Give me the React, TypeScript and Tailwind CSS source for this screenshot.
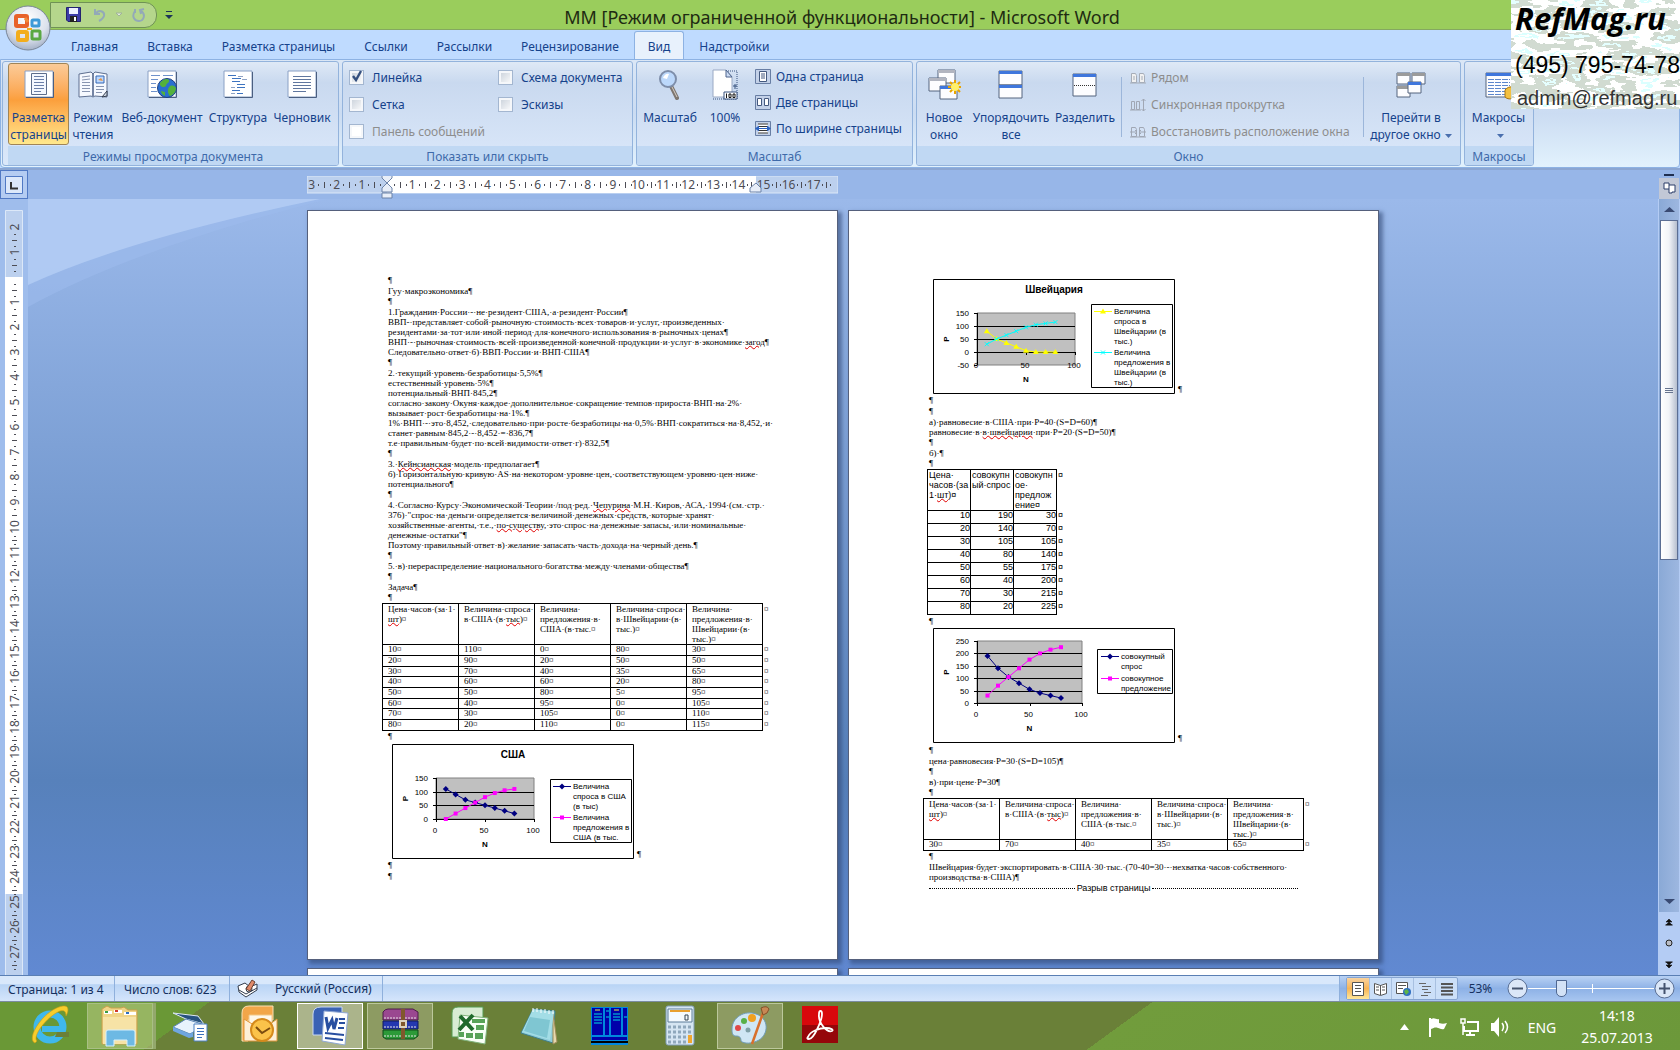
import { useState } from "react";
import type { ReactNode } from "react";

const uiFont = "font-['Noto_Sans','Open_Sans',sans-serif]";

/* ---------- ribbon icons ---------- */

const Sheet = ({ children }: { children?: ReactNode }) => (
  <svg width="32" height="32" viewBox="0 0 32 32">
    <path d="M2 3h28v26H2z" fill="#fff" stroke="#8aa0c4" />
    <path d="M30.500 4v25.500H3" fill="none" stroke="#4b5f80" />
    {children}
  </svg>
);

const PageLayoutIcon = () => (
  <Sheet>
    <path d="M8.500 5.500h15v21h-15z" fill="#f4f8ff" stroke="#5c6d8c" />
    <path d="M11 8.500h10M11 11.500h10M11 14.500h10M11 17.500h10M11 20.500h10M11 23.500h7" stroke="#6b7fa8" />
  </Sheet>
);

const ReadingIcon = () => (
  <svg width="32" height="32" viewBox="0 0 32 32">
    <path d="M2 6l12-2 2 2 2-2 12 2v23l-12-1-2 1-2-1-12 1z" fill="#f6f9ff" stroke="#5e6f90" />
    <path d="M16 6v23" stroke="#7484a4" strokeWidth="2" />
    <path d="M5 9l8-1M5 12l8-1M5 14.500h8M5 17.500h8M5 20.500h8M5 23.500h8M19 18.500h8M19 21.500h8M19 24.500h6" stroke="#8794b0" />
    <path d="M19 8h8v7h-8z" fill="#bcd8ff" stroke="#3769b4" />
    <path d="M21 12l3-2 2 3z" fill="#e59442" />
    <path d="M25 29l5-1v-5z" fill="#d3dbe8" stroke="#333c4c" />
  </svg>
);

const WebIcon = () => (
  <Sheet>
    <path d="M5 7.500h9M17 7.500h10M5 11.500h7M5 15.500h5M5 19.500h5M5 23.500h6" stroke="#6f92cc" />
    <circle cx="21" cy="20" r="9.500" fill="#2a6fd0" stroke="#1d3f80" />
    <path d="M14 15c3-4 7-5 9-3 1 3-3 3-3 6-2 2-5 1-6-1zM23 19c3-3 6-1 7 1 0 4-3 7-6 8-2-2-3-6-1-9zM15 23l4 1v4c-2-1-4-3-4-5z" fill="#54b13c" />
  </Sheet>
);

const StructureIcon = () => (
  <Sheet>
    <path d="M6 7.500h8M10 10.500h9M10 13.500h8M15 16.500h8M15 19.500h8M10 22.500h8M15 25.500h6" stroke="#3e74c0" />
    <path d="M16 8.500h5M20 11.500h5M9 19.500h4M9 25.500h4" stroke="#8fa2c4" />
  </Sheet>
);

const DraftIcon = () => (
  <Sheet>
    <path d="M7 8.500h18M7 11.500h18M7 14.500h18M7 17.500h18M7 20.500h18M7 23.500h13" stroke="#60779f" />
  </Sheet>
);

const LensIcon = () => (
  <svg width="32" height="32" viewBox="0 0 32 32">
    <path d="M17 18l6 12" stroke="#7d7670" strokeWidth="4" strokeLinecap="round" />
    <path d="M18 19l5 10" stroke="#d8cfc6" />
    <circle cx="14" cy="11" r="8" fill="#bcd8fb" stroke="#7e8eaa" strokeWidth="2" />
    <path d="M9 10a5 5 0 0 1 6-4l-2 5z" fill="#fff" />
  </svg>
);

const HundredIcon = () => (
  <svg width="32" height="32" viewBox="0 0 32 32">
    <path d="M4 31h24V3H17" fill="none" stroke="#39527e" strokeDasharray="1 1" />
    <path d="M4 2h13l6 7v20H4z" fill="#fff" stroke="#9aa9c4" />
    <path d="M17 2v7h6z" fill="#cddcf4" stroke="#4e648c" />
    <path d="M24 18h4M26 16v5" stroke="#39527e" />
    <path d="M15 24h13v7H15z" fill="#fff" stroke="#39527e" />
    <path d="M17.500 25.500v4.500M20 26h2v3.500h-2zM24 26h2v3.500h-2z" fill="none" stroke="#111" />
  </svg>
);

const Win = ({ x, y, w, h, c = "#3f76dc" }: { x: number; y: number; w: number; h: number; c?: string }) => (
  <>
    <path d={`M${x} ${y}h${w}v${h}h${-w}z`} fill="#fdfdff" stroke="#55657f" />
    <path d={`M${x} ${y}h${w}v3h${-w}z`} fill={c} />
  </>
);

const NewWindowIcon = () => (
  <svg width="34" height="32" viewBox="0 0 34 32">
    <Win x={11} y={2} w={17} h={13} c="#b2b5c0" />
    <Win x={2} y={10} w={17} h={13} c="#b2b5c0" />
    <Win x={13} y={18} w={17} h={13} />
    <path d="M28 12v14M21 19h14M23 14l10 10M33 14L23 24" stroke="#e9a400" strokeWidth="2" />
    <circle cx="28" cy="19" r="4" fill="#fff06a" />
  </svg>
);

const ArrangeIcon = () => (
  <svg width="32" height="32" viewBox="0 0 32 32">
    <Win x={4} y={3} w={23} h={14} />
    <Win x={4} y={17} w={23} h={13} />
  </svg>
);

const SplitIcon = () => (
  <svg width="32" height="32" viewBox="0 0 32 32">
    <Win x={4} y={6} w={23} h={22} />
    <path d="M5 17.500h22" stroke="#333" strokeDasharray="1 1" />
  </svg>
);

const SwitchIcon = () => (
  <svg width="32" height="32" viewBox="0 0 32 32">
    <Win x={2} y={5} w={13} h={11} c="#9b9b9b" />
    <Win x={17} y={5} w={13} h={11} c="#9b9b9b" />
    <Win x={2} y={18} w={13} h={11} c="#9b9b9b" />
    <Win x={13} y={14} w={13} h={11} />
  </svg>
);

const MacroIcon = () => (
  <svg width="32" height="32" viewBox="0 0 32 32">
    <Win x={3} y={5} w={26} h={24} />
    <path d="M5 11.500h22M5 14.500h22M5 17.500h22M5 20.500h22M5 23.500h22M5 26.500h22" stroke="#5c86cc" strokeDasharray="6 1" />
    <path d="M22 22c4-5 10-3 10-1v8c-4 3-8 2-10 0z" fill="#f3c040" stroke="#a87410" />
  </svg>
);

const SmallIcon = ({ kind }: { kind: string }) => (
  <svg width="16" height="16" viewBox="0 0 16 16">
    {["one", "two", "wide"].includes(kind) && (
      <path d="M.5.5h15v14H.5z" fill="#c3d1e8" stroke="#687ea4" />
    )}
    {kind === "one" && <path d="M4.500 2.500h7v10h-7zM6 5h4M6 7h4M6 9h4" fill="#fff" stroke="#44597f" />}
    {kind === "two" && <path d="M2.500 3.500h4v7h-4zM9.500 3.500h4v7h-4z" fill="#fff" stroke="#44597f" />}
    {kind === "wide" && (
      <>
        <path d="M3 2.500h10v10H3z" fill="#fff" />
        <path d="M3 3h10M3 5.500h10M3 9.500h10M3 12h10" stroke="#333" />
        <path d="M0 7.500l4-3v6zM16 7.500l-4-3v6z" fill="#2c62c0" />
        <path d="M3 7.500h10" stroke="#2c62c0" />
      </>
    )}
    {kind === "side" && <path d="M1.500 3.500h4l1 2v7h-5zM9.500 3.500h4l1 2v7h-5zM0 13h16M3 7h2M3 9h2M11 7h2M11 9h2" fill="#f1f1f1" stroke="#a6adb8" />}
    {kind === "sync" && <path d="M1.500 4.500h3v8h-3zM6.500 4.500h3v8h-3zM0 13h11M13.500 2v12M11.500 4l2-2 2 2M11.500 12l2 2 2-2" fill="none" stroke="#a0a7b4" />}
    {kind === "reset" && <path d="M1.500 3.500h4l1 2v7h-5zM9.500 3.500h4l1 2v7h-5zM0 13h16M0 8h7M5 6l2 2-2 2M16 8H9M11 6L9 8l2 2" fill="none" stroke="#a0a7b4" />}
  </svg>
);

/* ---------- ribbon ---------- */

const tabs = ["Главная", "Вставка", "Разметка страницы", "Ссылки", "Рассылки", "Рецензирование", "Вид", "Надстройки"];

const Group = ({ title, className, children }: { title: string; className: string; children: ReactNode }) => (
  <section
    className={`flex h-[105px] shrink-0 flex-col overflow-hidden rounded-[3px] border border-[#93b3dc] bg-linear-to-b from-[#dfe9f6] from-0% via-[#c9d9ef] via-20% to-[#dbe8fa] ${className}`}
  >
    <div className="flex h-[84px]">{children}</div>
    <h2 className="h-[19px] bg-[#c0d8f3] text-center leading-[21px] text-[#3e6aaa]">{title}</h2>
  </section>
);

const BigButton = ({ icon, lines, className, active }: { icon: ReactNode; lines: ReactNode[]; className: string; active?: boolean }) => (
  <button
    className={`mt-px flex h-[82px] shrink-0 flex-col items-center whitespace-nowrap rounded-[3px] border pt-1 ${
      active
        ? "border-[#a08456] bg-linear-to-b from-[#fbcb98] from-0% via-[#fb9f3c] via-45% to-[#ffe88c]"
        : "border-transparent"
    } ${className}`}
  >
    {icon}
    <span className="mt-[9px] leading-[17px]">
      {lines.map((line, i) => (
        <span key={i} className="block">
          {line}
        </span>
      ))}
    </span>
  </button>
);

const Check = ({ label, checked, disabled }: { label: string; checked?: boolean; disabled?: boolean }) => {
  const [on, setOn] = useState(!!checked);
  return (
    <label className={`relative flex h-[27px] items-center gap-2 whitespace-nowrap ${disabled ? "text-[#8d8d8d]" : ""}`}>
      <input
        type="checkbox"
        checked={on}
        disabled={disabled}
        onChange={() => setOn(!on)}
        className="size-[15px] appearance-none border border-[#a3b6d0] bg-linear-to-br from-[#c6ced8] to-white outline-2 -outline-offset-3 outline-[#f5f7fa] disabled:from-white"
      />
      {on && (
        <svg className="pointer-events-none absolute left-0.5 top-1.5" width="12" height="13" viewBox="0 0 12 13">
          <path d="M2 6l3 4 5-9" fill="none" stroke="#35507f" strokeWidth="2.400" />
        </svg>
      )}
      {label}
    </label>
  );
};

const RowButton = ({ kind, label, disabled }: { kind: string; label: string; disabled?: boolean }) => (
  <button disabled={disabled} className="flex h-[26px] items-center gap-[5px] whitespace-nowrap disabled:h-[27px] disabled:text-[#8d8d8d]">
    <SmallIcon kind={kind} />
    {label}
  </button>
);

const Divider = () => <span className="mt-[15px] h-[60px] w-px bg-[#9cb6da]" />;

const OfficeLogo = () => (
  <svg className="absolute left-1 top-1 z-10" width="48" height="48" viewBox="0 0 48 48">
    <defs>
      <radialGradient id="orb" cx=".5" cy=".3" r=".75">
        <stop offset="0" stopColor="#fff" />
        <stop offset=".6" stopColor="#dbe1ec" />
        <stop offset="1" stopColor="#9aa8c0" />
      </radialGradient>
    </defs>
    <circle cx="24" cy="24" r="22" fill="url(#orb)" stroke="#7a8698" />
    <g fill="none" strokeWidth="4">
      <rect x="12" y="12" width="11" height="10" rx="1" stroke="#e8622a" />
      <path d="M21 14l3 4" stroke="#f08a3c" strokeWidth="3" />
      <rect x="28" y="16" width="7" height="6" rx="1" stroke="#3e9ad8" strokeWidth="3" />
      <rect x="14" y="28" width="9" height="8" rx="1" stroke="#f3ad1c" />
      <rect x="28" y="27" width="8" height="8" rx="1" stroke="#5aa843" strokeWidth="3" />
      <path d="M23 25h5" stroke="#f3ad1c" strokeWidth="2" />
    </g>
  </svg>
);

const TitleBar = () => (
  <header className="flex h-[30px] items-center border-b border-[#84a860] bg-[#9acd5c] text-[#1e2b12]">
    <div className="ml-[50px] flex h-[26px] w-[107px] items-center rounded-r-[12px] border border-[#6f9255] bg-[#b5d68c] pl-[15px]">
      <button aria-label="Сохранить">
        <svg width="15" height="15" viewBox="0 0 15 15">
          <path d="M.5.5h14v14H2l-1.500-1.500z" fill="#3c3ca8" stroke="#23236e" />
          <path d="M3 1h9v6H3z" fill="#eef1ff" />
          <path d="M4 9h7v6H4z" fill="#222" />
          <path d="M8 10h2v4H8z" fill="#fff" />
        </svg>
      </button>
      <button aria-label="Отменить" className="ml-3">
        <svg width="14" height="14" viewBox="0 0 14 14">
          <path d="M2 1v5h5M3 5c4-4 9-1 8 3-1 3-3 4-5 5" fill="none" stroke="#93a9b8" strokeWidth="2" />
        </svg>
      </button>
      <svg className="ml-2" width="8" height="5" viewBox="0 0 8 5">
        <path d="M1 1h6L4 4z" fill="#e2ecda" stroke="#9fb29a" />
      </svg>
      <button aria-label="Повторить" className="ml-[9px]">
        <svg width="14" height="14" viewBox="0 0 14 14">
          <path d="M3 3c-4 6 0 10 4 10 5 0 7-7 2-10M3 1v4M12 1L8 2l1 4" fill="none" stroke="#93a9b8" strokeWidth="2" />
        </svg>
      </button>
    </div>
    <svg className="ml-2" width="8" height="10" viewBox="0 0 8 10">
      <path d="M1 1.500h6" stroke="#1c3557" />
      <path d="M0 5h8L4 9z" fill="#1c3557" />
    </svg>
    <h1 className="flex-1 pr-[169px] pt-1 text-center text-[18px] leading-6">
      ММ [Режим ограниченной функциональности] - Microsoft Word
    </h1>
  </header>
);

const Arrow = () => (
  <svg className="ml-1 inline" width="7" height="4" viewBox="0 0 7 4">
    <path d="M0 0h7L3.500 4z" fill="#4a6fae" />
  </svg>
);

const Ribbon = () => {
  const [tab, setTab] = useState("Вид");
  return (
    <div className="bg-[#bfdbff] text-[#15428b]">
      <nav className="flex h-[29px] items-end gap-px pl-[57px]">
        {tabs.map((name) => (
          <button
            key={name}
            onClick={() => setTab(name)}
            className={`h-7 whitespace-nowrap rounded-t-[3px] border border-b-0 px-[13px] pt-0.5 ${
              tab === name ? "border-[#8db2e3] bg-[#e8f1fc]" : "border-transparent"
            }`}
          >
            {name}
          </button>
        ))}
      </nav>
      <div className="flex h-[109px] gap-[3px] rounded-b-[4px] border border-[#8db2e3] bg-linear-to-b from-[#dbe7f6] via-[#cbdcf2] to-[#e2f2fd] p-px">
        <Group title="Режимы просмотра документа" className="w-[337px] pl-[5px]">
          <BigButton active className="w-[61px]" icon={<PageLayoutIcon />} lines={["Разметка", "страницы"]} />
          <BigButton className="w-12" icon={<ReadingIcon />} lines={["Режим", "чтения"]} />
          <BigButton className="w-[90px]" icon={<WebIcon />} lines={["Веб-документ"]} />
          <BigButton className="w-[62px]" icon={<StructureIcon />} lines={["Структура"]} />
          <BigButton className="w-[66px]" icon={<DraftIcon />} lines={["Черновик"]} />
        </Group>
        <Group title="Показать или скрыть" className="w-[291px]">
          <div className="w-[149px] pl-[6px] pt-0.5">
            <Check label="Линейка" checked />
            <Check label="Сетка" />
            <Check label="Панель сообщений" disabled />
          </div>
          <div className="pl-[6px] pt-0.5">
            <Check label="Схема документа" />
            <Check label="Эскизы" />
          </div>
        </Group>
        <Group title="Масштаб" className="w-[277px]">
          <BigButton className="w-[66px]" icon={<LensIcon />} lines={["Масштаб"]} />
          <BigButton className="w-11" icon={<HundredIcon />} lines={["100%"]} />
          <div className="pl-2 pt-0.5">
            <RowButton kind="one" label="Одна страница" />
            <RowButton kind="two" label="Две страницы" />
            <RowButton kind="wide" label="По ширине страницы" />
          </div>
        </Group>
        <Group title="Окно" className="w-[545px]">
          <BigButton className="w-[54px]" icon={<NewWindowIcon />} lines={["Новое", "окно"]} />
          <BigButton className="w-[80px]" icon={<ArrangeIcon />} lines={["Упорядочить", "все"]} />
          <BigButton className="w-[68px]" icon={<SplitIcon />} lines={["Разделить"]} />
          <span className="w-0.5" />
          <Divider />
          <div className="w-[241px] pl-2 pt-0.5">
            <RowButton disabled kind="side" label="Рядом" />
            <RowButton disabled kind="sync" label="Синхронная прокрутка" />
            <RowButton disabled kind="reset" label="Восстановить расположение окна" />
          </div>
          <Divider />
          <BigButton className="w-[94px]" icon={<SwitchIcon />} lines={["Перейти в", <>другое окно<Arrow /></>]} />
        </Group>
        <Group title="Макросы" className="w-[70px]">
          <BigButton className="w-[67px]" icon={<MacroIcon />} lines={["Макросы", <Arrow />]} />
        </Group>
      </div>
    </div>
  );
};

const Watermark = () => (
  <div className="absolute right-0 top-0 z-20 h-[109px] w-[169px] overflow-hidden bg-white whitespace-nowrap text-black font-['Liberation_Sans',sans-serif]">
    <svg className="absolute inset-0 size-full">
      <filter id="stone" x="0" y="0" width="1" height="1" colorInterpolationFilters="sRGB">
        <feTurbulence type="fractalNoise" baseFrequency=".04 .12" numOctaves="3" seed="4" />
        <feColorMatrix values="1 0 0 0 0 1 0 0 0 0 1 0 0 0 0 0 0 0 0 1" />
        <feComponentTransfer>
          <feFuncR type="discrete" tableValues="1 1 .86 1 1 .82 .82 .9 .82 .82" />
          <feFuncG type="discrete" tableValues="1 1 1 1 1 .86 .86 1 .86 .86" />
          <feFuncB type="discrete" tableValues="1 1 1 1 1 .82 .82 1 .82 .82" />
        </feComponentTransfer>
      </filter>
      <rect width="100%" height="100%" filter="url(#stone)" />
    </svg>
    <div className="relative pl-1">
      <p className="text-[31px] font-bold italic leading-[36px] font-['Open_Sans',sans-serif]">RefMag.ru</p>
      <p className="pt-[14px] text-[23px] leading-[30px]">(495) 795-74-78</p>
      <a href="mailto:admin@refmag.ru" className="block pt-1 pl-0.5 text-[20px] leading-[28px] text-[#333]">
        admin@refmag.ru
      </a>
    </div>
  </div>
);

/* ---------- rulers ---------- */

const marks = (from: number, to: number, zero: number, step: number, vertical: boolean) => {
  const out: ReactNode[] = [];
  for (let n = from; n <= to; n++) {
    const at = zero + n * step;
    if (n !== 0) {
      out.push(
        vertical ? (
          <text key={n} x={0} y={0} transform={`translate(14 ${at}) rotate(-90)`} textAnchor="middle">
            {Math.abs(n)}
          </text>
        ) : (
          <text key={n} x={at} y={13} textAnchor="middle">
            {Math.abs(n)}
          </text>
        )
      );
    }
    const half = Math.round(at + step / 2) + 0.5;
    const dot = Math.abs(n) > 9 ? 4 : 6;
    out.push(
      <path
        key={`m${n}`}
        d={
          vertical
            ? `M7 ${half}h5M9 ${half - dot}h2M9 ${half + dot}h2`
            : `M${half} 6v6M${half - dot} 8v2M${half + dot} 8v2`
        }
        stroke="#4d4d55"
      />
    );
  }
  return out;
};

const HorizontalRuler = () => (
  <svg width="531" height="23" viewBox="0 0 531 23" className="text-[12px] font-['Noto_Sans',sans-serif]" fill="#4d4d55">
    <path d="M0 0h531v17H0z" fill="#bcd0ee" stroke="#dce8f8" />
    <path d="M80 0h369v17H80z" fill="#fff" />
    {marks(-3, 17, 80, 25.1, false)}
    <path d="M75 -2h10v4l-5 5-5-5zM75 16v-4l5-5 5 5v4zM75 17h10v5H75zM443 16v-4l6-5 5 5v4z" fill="#e8eef8" stroke="#6d83a8" />
  </svg>
);

const VerticalRuler = () => (
  <div className="w-7 shrink-0 overflow-hidden bg-[#9fbdec] pl-[5px] pt-[11px]">
    <svg width="19" height="765" viewBox="0 0 19 765" className="text-[12px] font-['Noto_Sans',sans-serif]" fill="#4d4d55">
      <path d="M.5.5h17v765H.5z" fill="#bcd0ee" stroke="#dce8f8" />
      <path d="M0 67h18v617H0z" fill="#fff" />
      {marks(-2, 27, 67, 25, true)}
    </svg>
  </div>
);

/* ---------- document text ---------- */

// words between ~ are marked by the spell checker
const Rich = ({ text }: { text: string }) => (
  <>
    {text.split("~").map((part, i) =>
      i % 2 ? (
        <span key={i} className="underline decoration-[#e00000] decoration-wavy decoration-1 underline-offset-0">
          {part}
        </span>
      ) : (
        part
      )
    )}
  </>
);

const Para = ({ text = "", end = !text.endsWith("·") }: { text?: string; end?: boolean }) => (
  <p className={text ? "h-[10px]" : "h-[11px]"}>
    <Rich text={text} />
    {end && "¶"}
  </p>
);

const firstPage = [
  "",
  "Гуу·макроэкономика",
  "",
  "1.Гражданин·России·-·не·резидент·США,·а·резидент·России",
  "ВВП-·представляет·собой·рыночную·стоимость·всех·товаров·и·услуг,·произведенных·",
  "резидентами·за·тот·или·иной·период·для·конечного·использования·в·рыночных·ценах",
  "ВНП·-·рыночная·стоимость·всей·произведенной·конечной·продукции·и·услуг·в·экономике·~загод~",
  "Следовательно·ответ·б)·ВВП·России·и·ВНП·США",
  "",
  "2.·текущий·уровень·безработицы·5,5%",
  "естественный·уровень·5%",
  "потенциальный·ВНП·845,2",
  "согласно·закону·Окуня·каждое·дополнительное·сокращение·темпов·прироста·ВНП·на·2%·",
  "вызывает·рост·безработицы·на·1%.",
  "1%·ВНП·-·это·8,452,·следовательно·при·росте·безработицы·на·0,5%·ВНП·сократиться·на·8,452,·и·",
  "станет·равным·845,2·-·8,452·=·836,7",
  "т.е·правильным·будет·по·всей·видимости·ответ·г)·832,5",
  "",
  "3.·~Кейнсианская~·модель·предполагает",
  "б)·Горизонтальную·кривую·AS·на·некотором·уровне·цен,·соответствующем·уровню·цен·ниже·",
  "потенциального",
  "",
  "4.·Согласно·Курсу·Экономической·Теории·/под·ред.·~Чепурина~·М.Н.·Киров,·АСА,·1994·(см.·стр.·",
  "376)·\"спрос·на·деньги·определяется·величиной·денежных·средств,·которые·хранят·",
  "хозяйственные·агенты,·т.е.,·~по-существу~,·это·спрос·на·денежные·запасы,·или·номинальные·",
  "денежные·остатки\"",
  "Поэтому·правильный·ответ·в)·желание·запасать·часть·дохода·на·черный·день.",
  "",
  "5.·в)·перераспределение·национального·богатства·между·членами·общества",
  "",
  "Задача",
  "",
];

const wideHead = [
  ["Цена·часов·(за·1·", "~шт~)¤"],
  ["Величина·спроса·", "в·США·(в·~тыс~)¤"],
  ["Величина·", "предложения·в·", "США·(в·тыс.¤"],
  ["Величина·спроса·", "в·Швейцарии·(в·", "тыс.)¤"],
  ["Величина·", "предложения·в·", "Швейцарии·(в·", "тыс.)¤"],
];

const rows = [
  [10, 110, 0, 80, 30],
  [20, 90, 20, 50, 50],
  [30, 70, 40, 35, 65],
  [40, 60, 60, 20, 80],
  [50, 50, 80, 5, 95],
  [60, 40, 95, 0, 105],
  [70, 30, 105, 0, 110],
  [80, 20, 110, 0, 115],
];

const totals = [
  [10, 190, 30],
  [20, 140, 70],
  [30, 105, 105],
  [40, 80, 140],
  [50, 55, 175],
  [60, 40, 200],
  [70, 30, 215],
  [80, 20, 225],
];

const WideTable = ({ data }: { data: number[][] }) => (
  <table className="-ml-[6px] w-[389px] table-fixed border-collapse">
    <thead>
      <tr className="align-top">
        {wideHead.map((cell, i) => (
          <th key={i} className="w-[76px] border border-black p-0 pl-[5px] text-left font-normal">
            {cell.map((line) => (
              <span key={line} className="block">
                <Rich text={line} />
              </span>
            ))}
          </th>
        ))}
        <td className="w-[9px] pl-px">¤</td>
      </tr>
    </thead>
    <tbody>
      {data.map((row) => (
        <tr key={row[0]} className="h-[11px] align-top leading-[9px] nth-[3n]:h-[10px]">
          {row.map((value, i) => (
            <td key={i} className="border border-black p-0 pl-[5px]">
              <span className="block h-[9px]">{value}¤</span>
            </td>
          ))}
          <td className="pl-px">
            <span className="block h-[9px]">¤</span>
          </td>
        </tr>
      ))}
    </tbody>
  </table>
);

const totalHead = [
  ["Цена·", "часов·(за", "1·~шт~)¤"],
  ["совокупн", "ый·спрос"],
  ["совокупн", "ое·", "предлож", "ение¤"],
];

const TotalTable = () => (
  <table className="-ml-0.5 w-[138px] table-fixed border-collapse font-['Liberation_Sans',sans-serif]">
    <thead>
      <tr className="align-top">
        {totalHead.map((cell, i) => (
          <th key={i} className="w-[43px] border border-black p-0 pl-px text-left font-normal">
            {cell.map((line) => (
              <span key={line} className="block">
                <Rich text={line} />
              </span>
            ))}
          </th>
        ))}
        <td className="w-[9px] pl-px">¤</td>
      </tr>
    </thead>
    <tbody>
      {totals.map((row) => (
        <tr key={row[0]} className="align-top leading-[8px]">
          {row.map((value, i) => (
            <td key={i} className="border border-black p-0 text-right">
              <span className="block h-3">{value}</span>
            </td>
          ))}
          <td className="pl-px">¤</td>
        </tr>
      ))}
    </tbody>
  </table>
);

/* ---------- charts ---------- */

type Shape = "diamond" | "square" | "triangle" | "cross";
type Series = { color: string; shape: Shape; values: number[][]; legend: string[]; legendY: number };
type ChartProps = {
  title?: string;
  plot: [number, number, number, number];
  min: number;
  max: number;
  legend: [number, number, number];
  series: Series[];
};

const Marker = ({ x, y, shape, color }: { x: number; y: number; shape: Shape; color: string }) => {
  if (shape === "square") return <path d={`M${x - 2} ${y - 2}h4v4h-4z`} fill={color} />;
  if (shape === "diamond") return <path d={`M${x} ${y - 3}l3 3-3 3-3-3z`} fill={color} />;
  if (shape === "triangle") return <path d={`M${x} ${y - 3}l3 5h-6z`} fill={color} />;
  return <path d={`M${x - 2} ${y - 2}l4 4M${x + 2} ${y - 2}l-4 4`} stroke={color} />;
};

const Chart = ({ title, plot, min, max, legend, series }: ChartProps) => {
  const [left, top, right, bottom] = plot;
  const [legendX, legendTop, legendBottom] = legend;
  const px = (v: number) => left + ((right - left) * v) / 100;
  const py = (v: number) => bottom - ((bottom - top) * (v - min)) / (max - min);
  const ticks: number[] = [];
  for (let v = min; v <= max; v += 50) ticks.push(v);
  const textX = legendX === 164 ? 188 : 181;

  return (
    <div className="flex items-end gap-[3px] pl-1">
      <svg width="242" height="115" viewBox="0 0 242 115" className="shrink-0 text-[8px] font-['Liberation_Sans',sans-serif]">
        <path d="M.5.5h241v114H.5z" fill="#fff" stroke="#000" />
        {title && (
          <text x="121" y="14" textAnchor="middle" className="text-[10px] font-bold">
            {title}
          </text>
        )}
        <path d={`M${left} ${top}H${right}V${bottom}H${left}z`} fill="#c0c0c0" stroke="#808080" />
        {ticks.map((v) => (
          <g key={v}>
            {v !== max && v !== min && <path d={`M${left} ${Math.round(py(v)) + 0.5}H${right}`} stroke="#000" />}
            <path d={`M${left - 3} ${Math.round(py(v)) + 0.5}h3`} stroke="#000" />
            <text x={left - 8} y={Math.round(py(v)) + 3} textAnchor="end">
              {v}
            </text>
          </g>
        ))}
        <path d={`M${left + 0.5} ${top}V${bottom}M${left} ${Math.round(py(0)) + 0.5}H${right}`} stroke="#000" />
        {[0, 50, 100].map((v) => (
          <g key={v}>
            <path d={`M${Math.round(px(v)) + 0.5} ${Math.round(py(0))}v3`} stroke="#000" />
            <text x={px(v) - 1} y="89" textAnchor="middle">
              {v}
            </text>
          </g>
        ))}
        <text x={px(50)} y="103" textAnchor="middle" className="font-bold">
          N
        </text>
        <text transform={`translate(16 ${(top + bottom) / 2}) rotate(-90)`} textAnchor="middle" className="font-bold">
          P
        </text>
        <path d={`M${legendX + 0.5} ${legendTop + 0.5}H239.500V${legendBottom + 0.5}H${legendX + 0.5}z`} fill="#fff" stroke="#000" />
        {series.map((s) => (
          <g key={s.color}>
            <polyline points={s.values.map(([n, p]) => `${px(n)},${py(p)}`).join(" ")} fill="none" stroke={s.color} />
            {s.values.map(([n, p]) => (
              <Marker key={n} x={px(n)} y={py(p)} shape={s.shape} color={s.color} />
            ))}
            <path d={`M${textX - 20} ${s.legendY + 0.5}h18`} stroke={s.color} />
            <Marker x={textX - 11} y={s.legendY + 0.5} shape={s.shape} color={s.color} />
            {s.legend.map((line, i) => (
              <text key={line} x={textX} y={s.legendY + 3 + i * 10}>
                {line}
              </text>
            ))}
          </g>
        ))}
      </svg>
      <span>¶</span>
    </div>
  );
};

const column = (data: number[][], index: number) => data.map((row) => [row[0], row[index]]);

const PageSheet = ({ children }: { children?: ReactNode }) => (
  <article className="min-h-[750px] w-[531px] border border-[#55607c] bg-white px-20 shadow-[3px_3px_4px_1px_#30487499]">
    {children}
  </article>
);

const Pages = () => (
  <div className="grid grid-cols-[531px_531px] justify-center gap-x-[10px] gap-y-2 pt-[11px] whitespace-nowrap text-[9px] leading-[10px] text-black font-['Liberation_Serif',serif]">
    <PageSheet>
      <div className="pt-16">
        {firstPage.map((text, i) => (
          <Para key={i} text={text} />
        ))}
      </div>
      <WideTable data={rows} />
      <div className="pb-0.5">
        <Para />
      </div>
      <Chart
        title="США"
        plot={[44, 34, 142, 75]}
        min={0}
        max={150}
        legend={[158, 35, 98]}
        series={[
          { color: "#000080", shape: "diamond", values: column(rows, 1), legend: ["Величина", "спроса в США", "(в тыс)"], legendY: 42 },
          { color: "#ff00ff", shape: "square", values: column(rows, 2), legend: ["Величина", "предложения в", "США (в тыс."], legendY: 73 },
        ]}
      />
      <div className="pt-px">
        <Para />
        <Para />
      </div>
    </PageSheet>
    <PageSheet>
      <div className="pt-[68px]">
        <Chart
          title="Швейцария"
          plot={[44, 34, 142, 86]}
          min={-50}
          max={150}
          legend={[158, 25, 108]}
          series={[
            { color: "#ffff00", shape: "triangle", values: column(rows, 3), legend: ["Величина", "спроса в", "Швейцарии (в", "тыс.)"], legendY: 32 },
            { color: "#00ffff", shape: "cross", values: column(rows, 4), legend: ["Величина", "предложения в", "Швейцарии (в", "тыс.)"], legendY: 73 },
          ]}
        />
      </div>
      <div className="pt-px">
        <Para />
        <Para />
        <Para text="а)·равновесие·в·США·при·P=40·(S=D=60)" />
        <Para text="равновесие·в·~в·швейцарии~·при·P=20·(S=D=50)" />
        <Para />
        <Para text="б)·" end />
        <Para />
      </div>
      <TotalTable />
      <div className="py-px">
        <Para />
      </div>
      <Chart
        plot={[44, 13, 149, 75]}
        min={0}
        max={250}
        legend={[164, 21, 65]}
        series={[
          { color: "#000080", shape: "diamond", values: column(totals, 1), legend: ["совокупный", "спрос"], legendY: 28 },
          { color: "#ff00ff", shape: "square", values: column(totals, 2), legend: ["совокупное", "предложение"], legendY: 50 },
        ]}
      />
      <div className="pt-0.5">
        <Para />
        <Para text="цена·равновесия·P=30·(S=D=105)" />
        <Para />
        <Para text="в)·при·цене·P=30" />
        <Para />
      </div>
      <WideTable data={[rows[2]]} />
      <Para />
      <Para text="Швейцария·будет·экспортировать·в·США·30·тыс.·(70-40=30·-·нехватка·часов·собственного·" />
      <Para text="производства·в·США)" />
      <div className="flex items-center gap-0.5 font-['Liberation_Sans',sans-serif] leading-3">
        <span className="flex-1 border-b border-dotted border-black" />
        Разрыв страницы
        <span className="flex-1 border-b border-dotted border-black" />
      </div>
    </PageSheet>
    <PageSheet />
    <PageSheet />
  </div>
);

const Workspace = () => (
  <main className="flex min-h-0 flex-1 flex-col border-t-2 border-[#8ba6d2] bg-[#97b6e8]">
    <div className="flex h-[29px] shrink-0">
      <button aria-label="Табуляция" className="flex w-7 items-center justify-center border border-[#5079c4] bg-[#b4ccf2]">
        <svg width="18" height="18" viewBox="0 0 18 18">
          <path d="M.5.5h17v17H.5z" fill="#dce8fa" stroke="#5079c4" />
          <path d="M6 6v6.500h7" fill="none" stroke="#333" strokeWidth="2" />
        </svg>
      </button>
      <div className="flex flex-1 justify-center">
        <div className="w-[1072px] pt-1.5">
          <HorizontalRuler />
        </div>
      </div>
      <div className="flex w-[22px] flex-col items-center pt-1">
        <span className="mb-0.5 h-0.5 w-2.5 bg-[#1f2f50]" />
        <button aria-label="Линейка" className="flex h-[22px] w-5 items-center justify-center bg-[#c2c8d6]">
          <svg width="13" height="12" viewBox="0 0 13 12">
            <path d="M1 1h5v2h6v7h-3v1H6V7H1zM6 3v4" fill="#fff" stroke="#2a3d68" />
          </svg>
        </button>
      </div>
    </div>
    <div className="flex min-h-0 flex-1">
      <VerticalRuler />
      <div className="relative min-w-0 flex-1 overflow-hidden bg-linear-to-b from-[#9bb9ea] from-0% via-[#5781bb] via-75% to-[#6189d2]">
        <svg className="absolute left-0 top-0" width="300" height="110" viewBox="0 0 300 110">
          <path d="M0 0h300Q105 50 0 108z" fill="#9dbbec" fillOpacity=".6" />
          <path d="M0 0h292Q100 40 0 86z" fill="#b9d2f6" fillOpacity=".7" />
        </svg>
        <div className="relative">
          <Pages />
        </div>
      </div>
      <div className="flex w-[22px] flex-col items-center bg-[#b4ccf4]">
        <div className="flex w-5 flex-1 flex-col items-center bg-linear-to-r from-[#8aa9d6] to-[#9db7e0]">
          <button aria-label="Вверх" className="flex h-[21px] items-center">
            <svg width="11" height="5" viewBox="0 0 11 5">
              <path d="M5.500 0L11 5H0z" fill="#394a72" />
            </svg>
          </button>
          <div className="flex h-[340px] w-[18px] flex-col items-center justify-center gap-px border border-[#5b6e94] bg-linear-to-r from-white via-[#f2f4f8] to-[#b6bfcf]">
            <span className="h-px w-2 bg-[#66748f]" />
            <span className="h-px w-2 bg-[#66748f]" />
            <span className="h-px w-2 bg-[#66748f]" />
          </div>
          <span className="flex-1" />
          <button aria-label="Вниз" className="flex h-[22px] items-center">
            <svg width="11" height="5" viewBox="0 0 11 5">
              <path d="M0 0h11L5.500 5z" fill="#394a72" />
            </svg>
          </button>
        </div>
        <svg width="20" height="63" viewBox="0 0 20 63">
          <path d="M7 10l3-3 3 3zM7 13l3-3 3 3zM6 13h8M7 50l3 3 3-3zM7 53l3 3 3-3zM6 50h8" fill="#111" stroke="#111" strokeWidth=".6" />
          <circle cx="10" cy="31" r="3" fill="#b9bdc6" stroke="#222" />
        </svg>
      </div>
    </div>
  </main>
);

/* ---------- status bar ---------- */

const viewButtons: [string, ReactNode][] = [
  ["Разметка страницы", <path d="M2.500 1.500h11v13h-11zM5 4.500h6M5 7.500h6M5 10.500h6" fill="#fff" stroke="#555" />],
  ["Режим чтения", <path d="M1.500 2.500l6 2 6-2v10l-6 2-6-2zM7.500 4v10M3 6h3M3 9h3M9 6h3M9 9h3" fill="#fff" stroke="#555" />],
  [
    "Веб-документ",
    <>
      <path d="M1.500 1.500h11v11h-11zM3 4.500h8M3 7.500h5" fill="#fff" stroke="#555" />
      <circle cx="12" cy="11" r="4" fill="#2f6fc0" />
      <path d="M9 10l3-2 2 3-3 3z" fill="#5fb544" />
    </>,
  ],
  ["Структура", <path d="M2 2.500h7M5 5.500h9M5 8.500h6M7 11.500h7M4 14.500h7" stroke="#666" />],
  ["Черновик", <path d="M2 3h12M2 6.500h12M2 10h12M2 13.500h12" stroke="#555" strokeWidth="2" />],
];

const ZoomButton = ({ label, d, className }: { label: string; d: string; className?: string }) => (
  <button aria-label={label} className={className}>
    <svg width="21" height="21" viewBox="0 0 21 21">
      <circle cx="10.500" cy="10.500" r="9.500" fill="#dbe7f8" stroke="#5b6f94" />
      <path d={d} stroke="#44536e" strokeWidth="2" />
    </svg>
  </button>
);

const StatusBar = () => (
  <footer className="flex h-[27px] shrink-0 items-stretch border-y border-t-[#5a7fb4] border-b-[#7b8ca0] bg-linear-to-b from-[#d9e8fb] from-30% via-[#b9d4f5] via-35% to-[#d5e5fb] leading-[27px] text-[#15305e]">
    <span className="w-[115px] border-r border-[#8fb0dc] pl-2">Страница: 1 из 4</span>
    <span className="w-[115px] border-r border-[#8fb0dc] pl-[9px]">Число слов: 623</span>
    <span className="flex w-[153px] items-center border-r border-[#8fb0dc] pl-[7px]">
      <svg width="22" height="20" viewBox="0 0 22 20">
        <path d="M1 7l7-3 5 4 7-3v6l-11 7-7-5z" fill="#fff" stroke="#333c4c" />
        <path d="M2 11l7 4 11-6" fill="none" stroke="#333c4c" />
        <circle cx="12" cy="10" r="3" fill="#fff" stroke="#333c4c" />
        <path d="M9 10l6-9 3 2-5 9z" fill="#e08a6a" stroke="#6b4030" />
      </svg>
      <span className="pl-4">Русский (Россия)</span>
    </span>
    <div className="ml-auto flex items-center border-l border-[#8fb0dc] bg-linear-to-b from-[#b9d2f4] via-[#8db1e6] to-[#a8c6f0] pl-1.5">
      <div className="flex h-[23px] items-stretch rounded-[2px] border border-[#86a5d2] bg-[#cbdff8]">
        {viewButtons.map(([name, icon], i) => (
          <button
            key={name}
            aria-label={name}
            className={`flex w-[22px] items-center justify-center border-l first:border-l-0 ${
              i === 0 ? "bg-linear-to-b from-[#f8d3a0] via-[#f7b455] to-[#ffe79a]" : "border-[#a8c0e0]"
            }`}
          >
            <svg width="16" height="16" viewBox="0 0 16 16">
              {icon}
            </svg>
          </button>
        ))}
      </div>
      <button className="w-[49px] pr-1">53%</button>
      <ZoomButton label="Уменьшить" d="M5 10.500h11" />
      <div className="relative flex h-6 w-[126px] items-center">
        <span className="absolute left-0 h-px w-full bg-white" />
        <span className="absolute left-[64px] h-[9px] w-px bg-white" />
        <input
          type="range"
          aria-label="Масштаб"
          defaultValue="24"
          className="relative h-5 w-full appearance-none bg-transparent [&::-webkit-slider-thumb]:h-[17px] [&::-webkit-slider-thumb]:w-[11px] [&::-webkit-slider-thumb]:appearance-none [&::-webkit-slider-thumb]:rounded-b-[5px] [&::-webkit-slider-thumb]:border [&::-webkit-slider-thumb]:border-[#4f6791] [&::-webkit-slider-thumb]:bg-[#d3e2f6]"
        />
      </div>
      <ZoomButton label="Увеличить" d="M5 10.500h11M10.500 5v11" className="mr-[5px]" />
    </div>
  </footer>
);

/* ---------- taskbar ---------- */

const apps: { name: string; state?: "open" | "focus" | "stack"; icon: ReactNode }[] = [
  {
    name: "Internet Explorer",
    icon: (
      <>
        <ellipse cx="20" cy="22" rx="13" ry="13" fill="none" stroke="#3fb8ec" strokeWidth="7" />
        <path d="M12 21h22v6H12z" fill="#3fb8ec" />
        <path d="M27 27h12v5H25z" fill="#6b8038" />
        <path d="M5 38C-5 34 14 4 33 1c6-1 6 5 3 10 0-5-2-6-6-5C16 12 2 32 7 36z" fill="#f7cd2c" stroke="#c99a10" strokeWidth=".6" />
      </>
    ),
  },
  {
    name: "Проводник",
    state: "stack",
    icon: (
      <>
        <path d="M2 4l5-3 4 2h10l3-1 4 3h9v34H2z" fill="#f0d488" stroke="#c9a04c" />
        <path d="M4 6h8v3H4zM14 5h8v3h-8zM24 7h12v3H24z" fill="#fff" />
        <path d="M5 6h3v2H5z" fill="#3a9c46" />
        <path d="M15 5h3v2h-3z" fill="#d13a2c" />
        <path d="M26 7h3v2h-3z" fill="#2f6fc0" />
        <path d="M3 12h33v27H3z" fill="#f7e3a6" />
        <path d="M6 41V27q0-2 2-2h25q2 0 2 2v14h-8v-6H14v6z" fill="#6db9e4" stroke="#d8f0fb" />
      </>
    ),
  },
  {
    name: "Сканер",
    icon: (
      <>
        <path d="M3 8l25 3 6 8-18-5z" fill="#27527e" stroke="#dce8f4" />
        <path d="M3 22l13-8 19 6-15 9z" fill="#e8f3fd" stroke="#5c86b8" />
        <path d="M3 22l17 7 3-2v5l-4 1L3 26z" fill="#6fa6e0" />
        <path d="M24 19h13v17H24z" fill="#fff" stroke="#4b7fc0" />
        <path d="M27 23.500h7M27 26.500h7M27 29.500h7M27 32.500h5" stroke="#3a70c0" />
      </>
    ),
  },
  {
    name: "Outlook",
    icon: (
      <>
        <path d="M2 8q0-7 7-7h24v14H8v21H2z" fill="#f2a649" stroke="#fbe0b4" />
        <path d="M9 10h23v18H9z" fill="#fff8ea" stroke="#f2c684" />
        <path d="M4 14l18 11 15-11v22H4z" fill="#fdf0d8" stroke="#e0963a" />
        <circle cx="22" cy="25" r="11" fill="#fbc34a" stroke="#d58a1c" strokeWidth="2" />
        <path d="M16 22l6 6 8-5" fill="none" stroke="#7a4c10" strokeWidth="2" />
      </>
    ),
  },
  {
    name: "Word",
    state: "focus",
    icon: (
      <>
        <path d="M3 9q0-7 8-7h21v28H3z" fill="#3a62b4" stroke="#c9d8f4" />
        <path d="M14 6l24 2-3 32-23-4z" fill="#fdfeff" stroke="#8fa8d4" />
        <path d="M16 12l2 11 4-8 2 9 3-11" fill="none" stroke="#274ea0" strokeWidth="3" />
        <path d="M29 14h6M29 18h6M28 23h6M15 28l19 2M15 33l18 2" stroke="#274ea0" strokeWidth="2" />
      </>
    ),
  },
  {
    name: "WinRAR",
    state: "open",
    icon: (
      <>
        <path d="M3 7q2-3 5-3h25l5 3v8H3z" fill="#9a4890" stroke="#4b1c48" />
        <path d="M3 16h35v8H3z" fill="#2438b0" stroke="#101b60" />
        <path d="M3 25h35v6l-4 3H6l-3-2z" fill="#2c9a38" stroke="#0d4a18" />
        <path d="M4 13h33M4 22h33M4 31h33" stroke="#e8e4e8" strokeDasharray="2 1" />
        <path d="M21 4h4v30h-4z" fill="#80582c" />
        <rect x="20" y="16" width="6" height="6" fill="none" stroke="#dcd4c0" strokeWidth="2" />
      </>
    ),
  },
  {
    name: "Excel",
    icon: (
      <>
        <path d="M2 8q0-6 6-6h25v30H2z" fill="#d8ecd4" stroke="#549a50" />
        <path d="M10 10l28 3-3 26-27-5z" fill="#f8fff6" stroke="#7fb27a" />
        <path d="M22 14h13v4H22zM26 20h8v5h-8zM16 28h7v5h-7zM25 28h8v6h-8zM9 27h5v5H9z" fill="#58a358" />
        <path d="M10 11l13 14M23 10L9 25" stroke="#1f6a2c" strokeWidth="4" />
      </>
    ),
  },
  {
    name: "Блокнот",
    icon: (
      <>
        <path d="M13 4l22 2-2 32L1 28z" fill="#8fcdd8" stroke="#3f7f8c" />
        <path d="M33 7l4 30-4 2z" fill="#e6d9ae" stroke="#9c8c58" />
        <path d="M13 4l21 3-4 28L2 27z" fill="#a3dde6" />
        <path d="M10 12l20 3-3 18L4 26z" fill="#7fc6d2" />
        <path d="M13 3v4M17 3v4M21 4v4M25 4v4M29 5v4M33 5v4" stroke="#fff" />
      </>
    ),
  },
  {
    name: "FAR",
    icon: (
      <>
        <path d="M1 2h37v38H1z" fill="#08d" />
        <path d="M2 3h11v27H2zM15 3h4v27h-4zM21 3h10v27H21zM33 3h4v27h-4zM2 32h35v3H2z" fill="#00a" />
        <path d="M4 9h8M4 12h8M4 15h8M4 18h8M16 6h3M16 12h3M23 9h7M23 12h7M23 15h7M34 12h3" stroke="#0dd" />
        <path d="M5 5h5M24 5h5" stroke="#ee4" />
        <path d="M1 36h37v2H1z" fill="#000" />
      </>
    ),
  },
  {
    name: "Калькулятор",
    icon: (
      <>
        <rect x="6" y="1" width="28" height="39" rx="2" fill="#d5e5f2" stroke="#7e9cb4" />
        <path d="M8 4h24v13H8z" fill="#f4faff" stroke="#5c7c98" />
        <path d="M10 6h20" stroke="#e8a030" strokeWidth="2" />
        <path d="M25 10h3v5h-3z" fill="none" stroke="#345" />
        <path d="M8 22h23M8 27h23M8 32h19M8 37h19" stroke="#8fa8bc" strokeWidth="3" strokeDasharray="3 2" />
        <path d="M28 30h4v8h-4z" fill="#f0a830" />
      </>
    ),
  },
  {
    name: "Paint",
    state: "open",
    icon: (
      <>
        <path d="M2 24C2 12 15 5 26 9c13 4 13 20 3 26-7 4-15 4-18 1 0-5-3-5-6-5-3-1-3-4-3-7z" fill="#cfe6f4" stroke="#6f9cb8" />
        <circle cx="8" cy="23" r="3" fill="#e04848" />
        <circle cx="14" cy="16" r="3" fill="#58b048" />
        <circle cx="22" cy="13" r="4" fill="#f0a020" />
        <circle cx="18" cy="25" r="2.500" fill="#7fa0a8" />
        <path d="M33 8L22 39" stroke="#d8702c" strokeWidth="2.500" />
        <path d="M31 3q6-3 8 1-1 5-6 6z" fill="#c88854" stroke="#845028" />
      </>
    ),
  },
  {
    name: "Adobe Reader",
    icon: (
      <>
        <path d="M2 1h36v37H2z" fill="#d8080c" />
        <path d="M2 20h36v18H2z" fill="#95060a" />
        <path d="M8 32c2-6 12-9 18-9 5 0 8 2 6 3-5 2-14-8-13-17 0-4 3-4 3 0 0 6-8 25-13 25-2 0-2-1-1-2z" fill="none" stroke="#fff" strokeWidth="1.800" />
      </>
    ),
  },
];

const stateClass = {
  none: "border-transparent",
  open: "border-[#bcc89c] bg-[#a5ad7e]/60",
  stack: "border-[#a8c084] bg-[#c2d28c]/50 shadow-[3px_0_0_0_#93a86c]",
  focus: "border-white bg-[#bcc0a0]/80",
};

const TaskBar = () => (
  <footer className="flex h-12 shrink-0 items-center bg-[linear-gradient(144deg,#6a9836_0%,#6a9836_12%,#6a8038_12%,#6a8038_66%,#719c3c_66%,#6c983a_100%)] text-white">
    <div className="flex gap-1 pl-[17px]">
      {apps.map(({ name, state = "none", icon }) => (
        <button key={name} aria-label={name} className={`flex h-[46px] w-[66px] items-center justify-center border ${stateClass[state]}`}>
          <svg width="40" height="42" viewBox="0 0 40 42">
            {icon}
          </svg>
        </button>
      ))}
    </div>
    <div className="ml-auto flex items-center pt-0.5">
      <button aria-label="Скрытые значки">
        <svg width="11" height="8" viewBox="0 0 11 8">
          <path d="M5.500 1L10 7H1z" fill="#fff" />
        </svg>
      </button>
      <svg className="ml-[18px]" width="20" height="20" viewBox="0 0 20 20">
        <path d="M2 1v19" stroke="#fff" strokeWidth="2" />
        <path d="M3 2c4-2 5 1 8 0v4c3 1 5 1 8 0l-3 6c-3 1-4-1-6-1-3-1-4 0-7 1z" fill="#fff" />
      </svg>
      <svg className="ml-3" width="20" height="20" viewBox="0 0 20 20">
        <path d="M7 5h11v9H4V9M10 15v3M6 18h9" fill="none" stroke="#fff" strokeWidth="2" />
        <path d="M1 2h4v4H1zM3 6v12" fill="none" stroke="#fff" strokeWidth="1.500" />
      </svg>
      <svg className="ml-2.5" width="20" height="22" viewBox="0 0 20 22">
        <path d="M1 7h3l5-6v20l-5-6H1z" fill="#fff" />
        <path d="M12 7q3 4 0 8M15 5q5 6 0 12" fill="none" stroke="#fff" strokeWidth="1.500" />
      </svg>
      <span className="w-[64px] text-center text-[14px]">ENG</span>
      <time className="mr-5 w-[86px] text-center text-[14px] leading-[22px]">
        14:18
        <br />
        25.07.2013
      </time>
    </div>
  </footer>
);

export default function App() {
  return (
    <div className={`relative flex h-screen flex-col overflow-hidden text-[12px] ${uiFont}`}>
      <OfficeLogo />
      <TitleBar />
      <Ribbon />
      <Watermark />
      <Workspace />
      <StatusBar />
      <TaskBar />
    </div>
  );
}
